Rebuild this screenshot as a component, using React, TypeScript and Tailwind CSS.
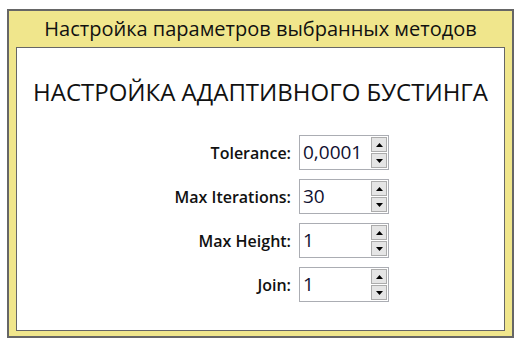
const fields = [
  { label: 'Tolerance:', value: '0,0001' },
  { label: 'Max Iterations:', value: '30' },
  { label: 'Max Height:', value: '1' },
  { label: 'Join:', value: '1' },
];

function Spin({ value }: { value: string }) {
  return (
    <div className="flex h-[35px] w-[90px] border border-[#abadb3] bg-white">
      <div className="flex flex-1 items-center pl-[3px] text-[19px] leading-none text-[#101030]">{value}</div>
      <div className="my-[1px] mr-[1px] flex w-[16px] flex-col gap-[1px]">
        <div className="flex flex-1 items-center justify-center border border-[#acacac] bg-[#e5e5e5]">
          <svg width="7" height="4" viewBox="0 0 7 4"><path d="M0 4 L3.5 0 L7 4 Z" fill="#000" /></svg>
        </div>
        <div className="flex flex-1 items-center justify-center border border-[#acacac] bg-[#e5e5e5]">
          <svg width="7" height="4" viewBox="0 0 7 4"><path d="M0 0 L3.5 4 L7 0 Z" fill="#000" /></svg>
        </div>
      </div>
    </div>
  );
}

export default function App() {
  return (
    <div className="h-[345px] w-[521px] bg-white pl-[7px] pt-[9px] font-['Open_Sans',sans-serif]">
      <div className="flex h-[329px] w-[507px] flex-col border-2 border-[#666] bg-[#f0e68c] px-[7px] pb-[5px]">
        <div className="flex h-[36px] items-center justify-center text-[20px] leading-none text-[#111]">
          Настройка параметров выбранных методов
        </div>
        <div className="flex-1 border border-[#666] bg-white">
          <div className="mt-[32px] text-center text-[24px] leading-none text-[#111]">
            НАСТРОЙКА АДАПТИВНОГО БУСТИНГА
          </div>
          <div className="mt-[31px] grid grid-cols-[274px_90px] gap-x-[8px] gap-y-[9px]">
            {fields.map((f) => (
              <div key={f.label} className="contents">
                <div className="flex items-center justify-end text-[16px] font-semibold text-[#111]">{f.label}</div>
                <Spin value={f.value} />
              </div>
            ))}
          </div>
        </div>
      </div>
    </div>
  );
}
